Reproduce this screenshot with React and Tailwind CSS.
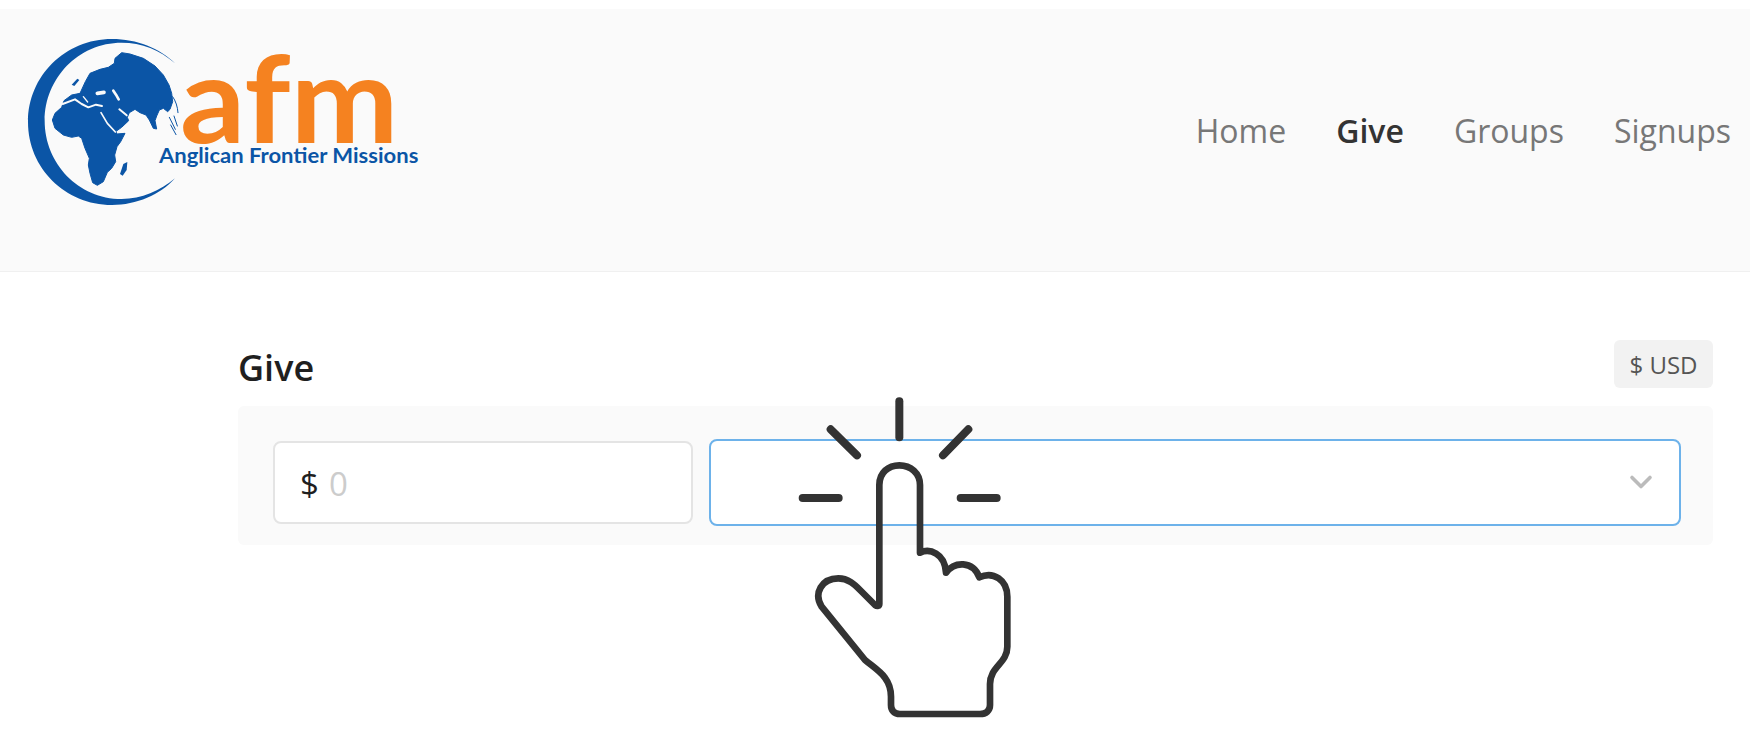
import { ChevronDown } from 'lucide-react';

const navItems = ['Home', 'Give', 'Groups', 'Signups'];

// Coordinates here are 3x the page pixels
function Logo() {
  return (
    <svg width="410" height="190" viewBox="0 0 1230 570" className="block overflow-visible">
      <path d="M465 100 C420 55 350 27 276 27 C135 27 24 138 24 276 C24 414 135 525 276 525 C350 525 420 495 465 445 C420 482 365 507 305 507 C175 507 74 400 74 272 C74 145 175 38 305 38 C365 38 420 60 465 100 Z" fill="#0b55a6" />
      {/* Eurasia and Africa */}
      <path
        fill="#0b55a6"
        stroke="#0b55a6"
        strokeWidth="3"
        strokeLinejoin="round"
        d="M305 68 L330 72 L370 85 L405 108 L430 135 L447 165 L455 190 L458 215 L450 238 L443 245 L430 235 L418 240 L410 258 L405 272 L410 297 L400 295 L388 270 L378 255 L360 248 L345 238 L328 248 L322 262 L326 272 L305 292 L288 304 L290 312 L315 310 L302 335 L291 350 L284 375 L287 395 L275 415 L262 427 L250 455 L232 466 L218 458 L210 430 L205 405 L208 385 L195 355 L185 325 L175 318 L155 322 L130 315 L105 295 L97 270 L105 250 L125 232 L132 212 L155 195 L180 190 L196 155 L210 130 L240 118 L265 112 L283 100 L285 85 Z"
      />
      {/* Seas */}
      <g fill="none" stroke="#fafafa" strokeLinecap="round" strokeLinejoin="round">
        <path d="M128 222 L165 208 L185 222 L205 232 L228 224 L246 228" strokeWidth="6" />
        <path d="M190 200 L203 216" strokeWidth="4" />
        <path d="M232 190 L252 187" strokeWidth="11" />
        <path d="M280 182 L288 194 L296 208" strokeWidth="8" />
        <path d="M243 248 L262 280 L286 306" strokeWidth="5" />
        <path d="M298 238 L320 256" strokeWidth="6" />
      </g>
      {/* Islands */}
      <g fill="#0b55a6">
        <path d="M300 432 L310 402 L322 396 L320 420 L308 437 Z" />
        <path d="M155 164 L172 146 L178 150 L163 168 Z" />
      </g>
      <g fill="none" stroke="#0b55a6" strokeWidth="3" strokeLinecap="round">
        <path d="M412 142 L440 165" />
        <path d="M458 200 Q472 220 474 248" />
        <path d="M448 262 L466 298" />
        <path d="M462 258 L472 288" />
        <path d="M452 285 L468 314" />
      </g>
      <text x="480" y="338" textLength="655" lengthAdjust="spacingAndGlyphs" fill="#f58220" fontSize="362" className="font-['Lato'] font-bold">
        afm
      </text>
      <text x="417" y="400" textLength="778" lengthAdjust="spacingAndGlyphs" fill="#0b55a6" fontSize="60" className="font-['Lato'] font-bold">
        Anglican Frontier Missions
      </text>
    </svg>
  );
}

function PointerHand() {
  return (
    <svg width="260" height="363" viewBox="0 0 780 1089" className="absolute left-[780px] top-[380px]">
      <g fill="none" stroke="#333333" strokeLinecap="round" strokeLinejoin="round">
        <g strokeWidth="24">
          <path d="M358 64 L358 172" />
          <path d="M152 148 L231 226" />
          <path d="M565 148 L489 226" />
          <path d="M68 354 L176 354" />
          <path d="M542 354 L650 354" />
        </g>
        <path
          strokeWidth="20"
          d="M298 672 L298 315 C298 278 325 256 358 256 C392 256 420 280 420 315 L420 518 C448 505 495 518 498 578 C522 545 578 540 598 592 C640 572 682 600 682 650 L682 800 C682 850 630 860 630 912 L630 975 C630 992 618 1002 600 1002 L360 1002 C343 1002 333 992 333 975 L333 950 C333 890 290 870 255 840 L125 680 C100 640 125 595 175 595 C205 595 225 615 240 630 L285 675 C292 680 298 678 298 672 Z"
        />
      </g>
    </svg>
  );
}

export default function App() {
  return (
    <div className="relative h-[743px] overflow-hidden bg-white pt-[9px] font-['Open_Sans',sans-serif]">
      <header className="flex h-[263px] items-start justify-between border-b border-[#f0f0f0] bg-[#fafafa] pr-[19px] pl-[20px]">
        <div className="pt-[21px]">
          <Logo />
        </div>
        <nav className="flex gap-[50px] pt-[100px] text-[32px] leading-[44px] text-[#777777]">
          {navItems.map((item) => (
            <a key={item} className={item === 'Give' ? 'font-semibold text-[#333333]' : ''}>
              {item}
            </a>
          ))}
        </nav>
      </header>

      <main className="pt-[68px] pr-[37px] pl-[238px]">
        <div className="flex h-[48px] items-center justify-between">
          <h2 className="mt-[8px] text-[36px] font-semibold text-[#1f1f1f]">Give</h2>
          <span className="flex h-[48px] w-[99px] items-center justify-center rounded-md bg-[#f2f2f2] pt-[1px] text-[24px] text-[#555555]">
            $ USD
          </span>
        </div>

        <div className="mt-[18px] flex h-[139px] items-center gap-[16px] rounded-md bg-[#fafafa] pt-[13px] pr-[32px] pl-[35px]">
          <label className="flex h-[83px] w-[420px] items-center rounded-lg border-2 border-[#e4e4e4] bg-white pt-[3px] pl-[25px] text-[33px] text-[#1f1f1f]">
            <span>$</span>
            <input placeholder="0" className="ml-[10px] w-full bg-transparent outline-none placeholder:text-[#cccccc]" />
          </label>
          <div className="flex h-[87px] flex-1 items-center justify-end rounded-lg border-2 border-[#6db2ea] bg-white pr-[20px]">
            <ChevronDown size={36} strokeWidth={2.4} className="text-[#bbbbbb]" />
          </div>
        </div>
      </main>

      <PointerHand />
    </div>
  );
}
